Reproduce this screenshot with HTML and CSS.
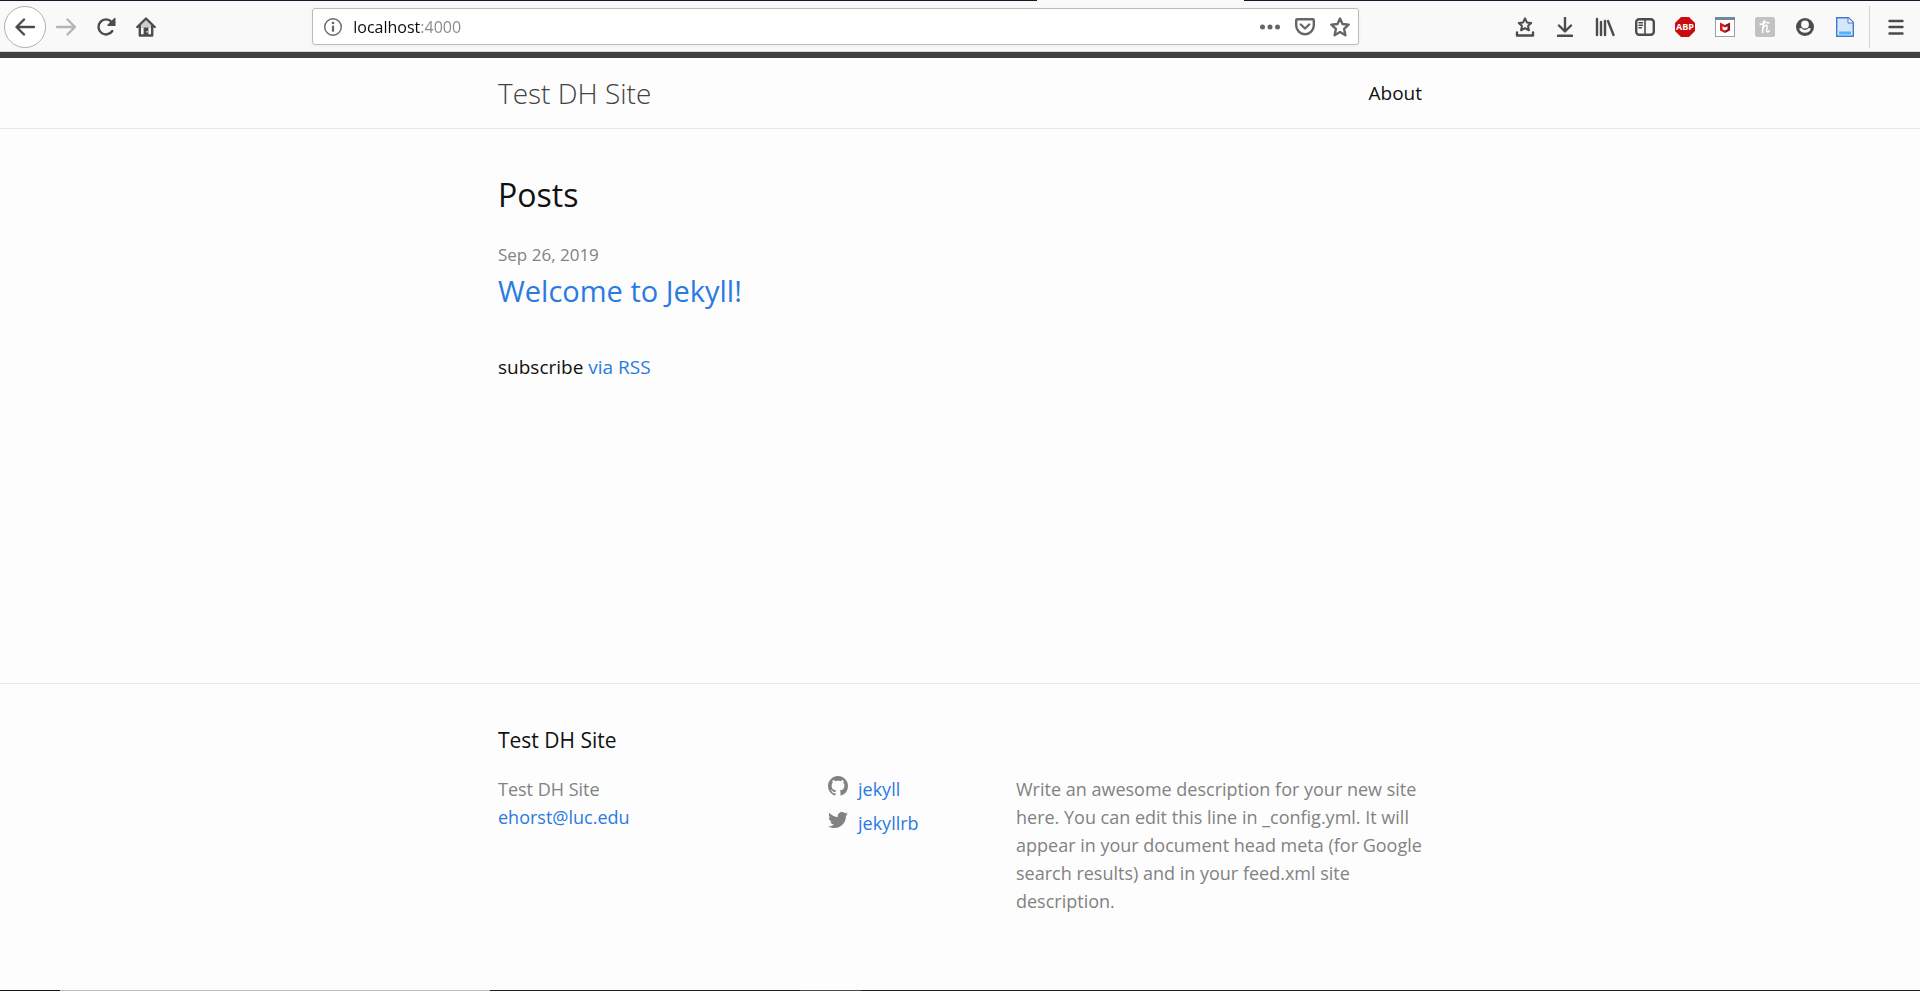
FILE: index.html
```html
<!DOCTYPE html>
<html lang="en">
<head>
<meta charset="utf-8">
<title>Test DH Site</title>
<link rel="stylesheet" href="styles.css">
</head>
<body>
<div class="window-edge-top"></div>
<nav class="toolbar" aria-label="Browser toolbar">
  <button class="back" aria-label="Back"><svg class="icon" viewBox="0 0 20 20"><path class="line" d="M19 10H2M9 2.500L1.500 10L9 17.500"/></svg></button>
  <button class="tool faded" aria-label="Forward"><svg class="icon" viewBox="0 0 20 20"><path class="line" d="M1 10H18M11.500 2.500L19 10L11.500 17.500"/></svg></button>
  <button class="tool" aria-label="Reload"><svg class="icon" viewBox="0 0 20 20"><path class="line" d="M16.300 14A7.500 7.500 0 1 1 15.500 4.800"/><path d="M19.500 1.200V9H11.700Q11 8.500 11.500 7.800L18.300 1Q19 .5 19.500 1.200Z"/></svg></button>
  <button class="tool" aria-label="Home"><svg class="icon" viewBox="0 0 20 20"><path class="line" d="M1.300 10L10 1.500L18.700 10M3.800 9V18.500H16.200V9"/><path d="M7.500 18V10.500H12.500V18ZM3 9L10 2L17 9V11H3Z" fill-opacity=".25"/><path d="M7.700 18.500V10.500H12.300V18.500Z"/><path d="M10.500 14h1.200v1.500h-1.200Z" fill="#fff"/></svg></button>
  <div class="spacer"></div>
  <div class="address">
    <button class="info" aria-label="Site information"><svg class="icon" viewBox="0 0 20 20"><circle cx="10" cy="10" r="8.300" fill="none" stroke="currentColor" stroke-width="1.400"/><circle cx="10" cy="6" r="1.300"/><path d="M8.900 8.700h2.200v6h-2.200Z"/></svg></button>
    <input class="url" type="text" aria-label="Address" value="localhost:4000">
    <button class="action" aria-label="Page actions"><svg class="icon" viewBox="0 0 20 20"><circle cx="2.500" cy="10" r="2.500"/><circle cx="10" cy="10" r="2.500"/><circle cx="17.500" cy="10" r="2.500"/></svg></button>
    <button class="action" aria-label="Save to Pocket"><svg class="icon" viewBox="0 0 20 20"><path class="line" d="M2.200 2.200H17.800Q18.800 2.200 18.800 3.200V8.500A8.800 8.800 0 0 1 1.200 8.500V3.200Q1.200 2.200 2.200 2.200ZM5.800 7.500L10 11.500L14.200 7.500"/></svg></button>
    <button class="action" aria-label="Bookmark this page"><svg class="icon" viewBox="0 0 20 20"><path class="line" d="M10 1.500L12.500 7L18.700 7.700L14.100 11.800L15.400 18.200L10 15L4.600 18.200L5.900 11.800L1.300 7.700L7.500 7Z"/></svg></button>
  </div>
  <div class="spacer"></div>
  <button class="tool" aria-label="Bookmarks menu"><svg class="icon" viewBox="0 0 20 20"><path class="medium" d="M10 1.300L11.900 5.400L16.200 5.900L13 8.900L13.900 13.300L10 11.100L6.100 13.300L7 8.900L3.800 5.900L8.100 5.400Z"/><path class="line" d="M2 15.500V18.500H18V15.500"/></svg></button>
  <button class="tool" aria-label="Downloads"><svg class="icon" viewBox="0 0 20 20"><path class="line" d="M10 1V14M4 8.500L10 14.500L16 8.500M3 18.800H17"/></svg></button>
  <button class="tool" aria-label="Library"><svg class="icon" viewBox="0 0 20 20"><path class="line" d="M2 2V18M6 5V18M10 4V18M13 4L18.500 18"/></svg></button>
  <button class="tool" aria-label="Sidebars"><svg class="icon" viewBox="0 0 20 20"><rect class="line" x="1.200" y="2.200" width="17.600" height="15.600" rx="3"/><path class="thin" d="M10 2V18M4 5.700H7.500M4 8.200H7.500M4 10.700H6.500"/></svg></button>
  <button class="tool" aria-label="Adblock Plus"><svg class="icon" viewBox="0 0 20 20"><path d="M6 0H14L20 6V14L14 20H6L0 14V6Z" fill="#c70d0d"/><text class="abp" x="10" y="13" text-anchor="middle">ABP</text></svg></button>
  <button class="tool" aria-label="McAfee"><svg class="icon" viewBox="0 0 20 20"><rect x=".5" y=".5" width="19" height="19" fill="#fff" stroke="#999fa3"/><path d="M0 0H20V3H0Z" fill="#6f8b99"/><path d="M5 5.500L10 8V10.500L7.500 9.200V12.300L10 13.500V16L5 13.500Z" fill="#d51920"/><path d="M15 5.500L10 8V10.500L12.500 9.200V12.300L10 13.500V16L15 13.500Z" fill="#8f1015"/></svg></button>
  <button class="tool" aria-label="Honey"><svg class="icon" viewBox="0 0 20 20"><rect width="20" height="20" rx="2.500" fill="#c2c2c2"/><path d="M5 7Q9 8 10 4.500Q9 3 8.300 6L7.500 15.500M7.700 12Q10 7.500 11.800 8.300Q12.800 9 11.500 13.500Q11.300 16 14.500 14M11.500 5.500L14 6" fill="none" stroke="#fff" stroke-width="1.500" stroke-linecap="round"/></svg></button>
  <button class="tool" aria-label="Account"><svg class="icon" viewBox="0 0 20 20"><circle cx="10" cy="10" r="9"/><circle cx="10" cy="7.500" r="3.900" fill="#f9f9fa"/><path d="M4 11.800Q5.200 11 6.300 10.900Q10 15 13.700 10.900Q14.800 11 16 11.800Q14.500 15.800 10 15.800Q5.500 15.800 4 11.800Z" fill="#f9f9fa"/></svg></button>
  <button class="tool" aria-label="Reader document"><svg class="icon" viewBox="0 0 20 20"><path d="M1.700 .7H13.500L18.300 5.500V19.300H1.700Z" fill="#d5e6fb" stroke="#4179cc" stroke-width="1.400"/><path d="M13 1V6H18" fill="#fff" stroke="#4179cc"/><path d="M4 14.500H16V17.500H4Z" fill="#48b5ff"/></svg></button>
  <div class="divider"></div>
  <button class="tool" aria-label="Open menu"><svg class="icon" viewBox="0 0 20 20"><path class="line" d="M3.500 4H16.500M3.500 10H16.500M3.500 16.500H16.500"/></svg></button>
</nav>

<header class="site-header">
  <div class="wrapper header-row">
    <a class="site-title" href="#">Test DH Site</a>
    <a class="page-link" href="#">About</a>
  </div>
</header>

<main class="content">
  <div class="wrapper">
    <h1 class="list-heading">Posts</h1>
    <article class="post">
      <time class="post-date" datetime="2019-09-26">Sep 26, 2019</time>
      <h2 class="post-title"><a class="link" href="#">Welcome to Jekyll!</a></h2>
    </article>
    <p class="subscribe">subscribe <a class="link" href="#">via RSS</a></p>
  </div>
</main>

<footer class="site-footer">
  <div class="wrapper">
    <h2 class="footer-heading">Test DH Site</h2>
    <div class="footer-columns">
      <ul class="list">
        <li>Test DH Site</li>
        <li><a class="link" href="#">ehorst@luc.edu</a></li>
      </ul>
      <ul class="list social">
        <li><a class="social-link" href="#"><svg class="social-icon" viewBox="0 0 16 16"><path d="M8 0C3.580 0 0 3.580 0 8c0 3.540 2.290 6.530 5.470 7.590.4.070.55-.17.55-.38 0-.19-.01-.82-.01-1.490-2.010.37-2.530-.49-2.690-.94-.09-.23-.48-.94-.82-1.130-.28-.15-.68-.52-.01-.53.63-.01 1.080.58 1.230.82.72 1.210 1.870.87 2.330.66.07-.52.28-.87.51-1.070-1.780-.2-3.640-.89-3.640-3.950 0-.87.31-1.590.82-2.150-.08-.2-.36-1.020.08-2.120 0 0 .67-.21 2.200.82.64-.18 1.320-.27 2-.27s1.360.09 2 .27c1.530-1.040 2.200-.82 2.200-.82.44 1.100.16 1.920.08 2.120.51.56.82 1.270.82 2.150 0 3.070-1.870 3.750-3.650 3.950.29.25.54.73.54 1.480 0 1.070-.01 1.930-.01 2.200 0 .21.15.46.55.38A8.010 8.010 0 0 0 16 8c0-4.420-3.580-8-8-8Z"/></svg><span>jekyll</span></a></li>
        <li><a class="social-link" href="#"><svg class="social-icon" viewBox="0 0 16 16"><path d="M15.969 3.058c-.586.260-1.217.436-1.878.515.675-.405 1.194-1.045 1.438-1.809-.632.375-1.332.647-2.076.793-.596-.636-1.446-1.033-2.387-1.033-1.806 0-3.270 1.464-3.270 3.270 0 .256.029.506.085.745C5.163 5.404 2.753 4.102 1.140 2.124c-.281.482-.442 1.044-.442 1.643 0 1.134.577 2.135 1.455 2.722-.536-.017-1.040-.164-1.481-.409v.041c0 1.584 1.127 2.906 2.623 3.206-.274.075-.563.115-.861.115-.211 0-.416-.021-.615-.059.416 1.299 1.624 2.245 3.055 2.271-1.119.877-2.529 1.400-4.061 1.400-.264 0-.524-.015-.780-.046 1.447.928 3.166 1.469 5.013 1.469 6.015 0 9.304-4.983 9.304-9.304 0-.142-.003-.283-.009-.423.639-.461 1.193-1.037 1.632-1.692Z"/></svg><span>jekyllrb</span></a></li>
      </ul>
      <p class="description">Write an awesome description for your new site here. You can edit this line in _config.yml. It will appear in your document head meta (for Google search results) and in your feed.xml site description.</p>
    </div>
  </div>
</footer>
<div class="window-edge-bottom"></div>
</body>
</html>
```
FILE: styles.css
```css
* {
  box-sizing: border-box;
}

body {
  margin: 0;
  min-height: 100vh;
  display: flex;
  flex-direction: column;
  background: #fdfdfd;
  color: #111;
  font-family: "Open Sans", "Noto Sans", sans-serif;
  font-size: 19px;
  line-height: 28px;
}

h1, h2, p, ul {
  margin: 0;
  padding: 0;
  font-weight: 400;
}

a {
  color: inherit;
  text-decoration: none;
}

button {
  padding: 0;
  border: 0;
  background: none;
  color: inherit;
  display: flex;
  align-items: center;
  justify-content: center;
}

/* Browser chrome */
.window-edge-top {
  height: 1px;
  background: linear-gradient(90deg, #17172c 54%, #f9f9fa 54%, #f9f9fa 64.8%, #17172c 64.8%);
}

.window-edge-bottom {
  height: 1px;
  background: linear-gradient(90deg, #151515 60px, #bbb 60px, #bbb 490px, #1d1b2e 490px, #1d1b2e 800px, #4b4a58 800px, #4b4a58 861px, #1d1b2e 861px);
}

.toolbar {
  display: flex;
  align-items: center;
  height: 57px;
  padding: 0 4px;
  background: #f9f9fa;
  border-bottom: 6px solid #424242;
  box-shadow: inset 0 -1px #d8d8d8;
  color: #4c4c4c;
}

.icon {
  width: 20px;
  height: 20px;
  fill: currentColor;
}

.line,
.medium,
.thin {
  fill: none;
  stroke: currentColor;
  stroke-width: 2.4px;
  stroke-linecap: round;
  stroke-linejoin: round;
}

.medium {
  stroke-width: 2px;
}

.thin {
  stroke-width: 1.6px;
}

.abp {
  fill: #fff;
  font: 700 9px "Open Sans", sans-serif;
}

.back {
  width: 42px;
  height: 42px;
  border: 1px solid #b0b0b0;
  border-radius: 50%;
  background: #fff;
}

.tool {
  width: 40px;
  height: 40px;
}

.faded {
  color: #b5b5b5;
}

.spacer {
  flex: 100;
}

.address {
  flex: 714;
  display: flex;
  align-items: center;
  height: 37px;
  border: 1px solid #bbb;
  border-radius: 3px;
  background: #fff;
  box-shadow: 0 1px 4px #0000000d;
  color: #666;
}

.info {
  width: 40px;
  height: 34px;
}

.url {
  flex: 1;
  min-width: 0;
  padding: 0;
  border: 0;
  outline: 0;
  font: 16px/24px "Open Sans", "Noto Sans", sans-serif;
  color: transparent;
  background: linear-gradient(90deg, #0c0c0d 67px, #888 67px);
  background-clip: text;
}

.action {
  width: 35px;
  height: 34px;
}

.divider {
  width: 1px;
  height: 42px;
  margin: 0 6px 0 4px;
  background: #d5d5d5;
}

/* Site */
.wrapper {
  width: 100%;
  max-width: 984px;
  margin: 0 auto;
  padding: 0 30px;
}

.site-header {
  border-bottom: 1px solid #e8e8e8;
}

.header-row {
  display: flex;
  align-items: center;
  justify-content: space-between;
  height: 70px;
}

.site-title {
  font-size: 28px;
  font-weight: 300;
  color: #424242;
}

.content {
  flex: 1;
  padding: 40px 0;
}

.list-heading {
  font-size: 32px;
  line-height: 52px;
}

.post {
  padding-top: 20px;
}

.post-date {
  display: block;
  font-size: 17px;
  color: #828282;
}

.post-title {
  font-size: 29px;
  line-height: 44px;
}

.link {
  color: #2a7ae2;
}

.subscribe {
  padding-top: 40px;
}

.site-footer {
  border-top: 1px solid #e8e8e8;
  padding: 40px 0 75px;
}

.footer-heading {
  font-size: 21px;
  line-height: 32px;
}

.footer-columns {
  display: grid;
  grid-template-columns: 330px 188px 1fr;
  padding-top: 19px;
  font-size: 18px;
  color: #828282;
}

.list {
  list-style: none;
}

.social {
  display: grid;
  gap: 6px;
  align-content: start;
}

.social-link {
  display: flex;
  gap: 10px;
  color: #2a7ae2;
}

.social-icon {
  width: 20px;
  height: 20px;
  margin-top: 1px;
  fill: #828282;
}
```
